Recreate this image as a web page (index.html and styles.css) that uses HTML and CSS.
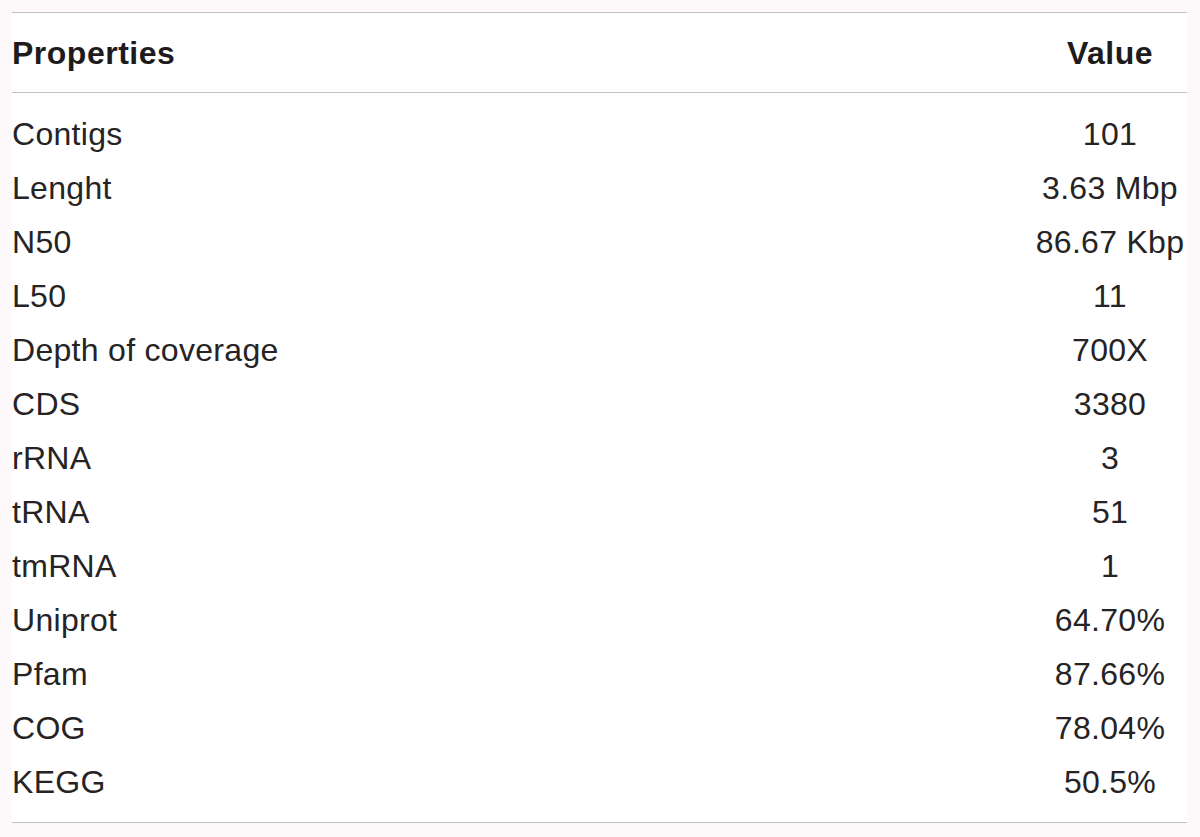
FILE: index.html
```html
<!DOCTYPE html>
<html>
<head>
<meta charset="utf-8">
<link rel="stylesheet" href="styles.css">
</head>
<body>
<table class="props">
  <colgroup><col class="c-name"><col class="c-val"></colgroup>
  <thead>
    <tr><th class="name">Properties</th><th class="val">Value</th></tr>
  </thead>
  <tbody>
    <tr class="first"><td class="name">Contigs</td><td class="val">101</td></tr>
    <tr><td class="name">Lenght</td><td class="val">3.63 Mbp</td></tr>
    <tr><td class="name">N50</td><td class="val">86.67 Kbp</td></tr>
    <tr><td class="name">L50</td><td class="val">11</td></tr>
    <tr><td class="name">Depth of coverage</td><td class="val">700X</td></tr>
    <tr><td class="name">CDS</td><td class="val">3380</td></tr>
    <tr><td class="name">rRNA</td><td class="val">3</td></tr>
    <tr><td class="name">tRNA</td><td class="val">51</td></tr>
    <tr><td class="name">tmRNA</td><td class="val">1</td></tr>
    <tr><td class="name">Uniprot</td><td class="val">64.70%</td></tr>
    <tr><td class="name">Pfam</td><td class="val">87.66%</td></tr>
    <tr><td class="name">COG</td><td class="val">78.04%</td></tr>
    <tr class="last"><td class="name">KEGG</td><td class="val">50.5%</td></tr>
  </tbody>
</table>
</body>
</html>
```
FILE: styles.css
```css
html, body {
  margin: 0;
  padding: 0;
  background: #fdf9fa;
}
body {
  padding: 12px 13px 0 12px;
  font-family: "Liberation Sans", Arial, Helvetica, sans-serif;
  color: #262324;
}
.props {
  width: 1175px;
  border-collapse: collapse;
  table-layout: fixed;
  background: #ffffff;
  border-top: 1px solid #c2c2c2;
  border-bottom: 1px solid #c2c2c2;
}
.c-val { width: 154px; }
.props th, .props td {
  padding: 0;
  font-size: 32px;
  white-space: nowrap;
}
.props th {
  font-weight: bold;
  line-height: 40px;
  letter-spacing: 0.5px;
  color: #1e1b1c;
  padding-top: 20px;
  padding-bottom: 19px;
  border-bottom: 1px solid #c2c2c2;
}
.props td {
  font-weight: normal;
  line-height: 54px;
  letter-spacing: 0.3px;
}
.name { text-align: left; }
.val { text-align: center; }
.first td { padding-top: 14px; }
.last td { padding-bottom: 13px; }
```
